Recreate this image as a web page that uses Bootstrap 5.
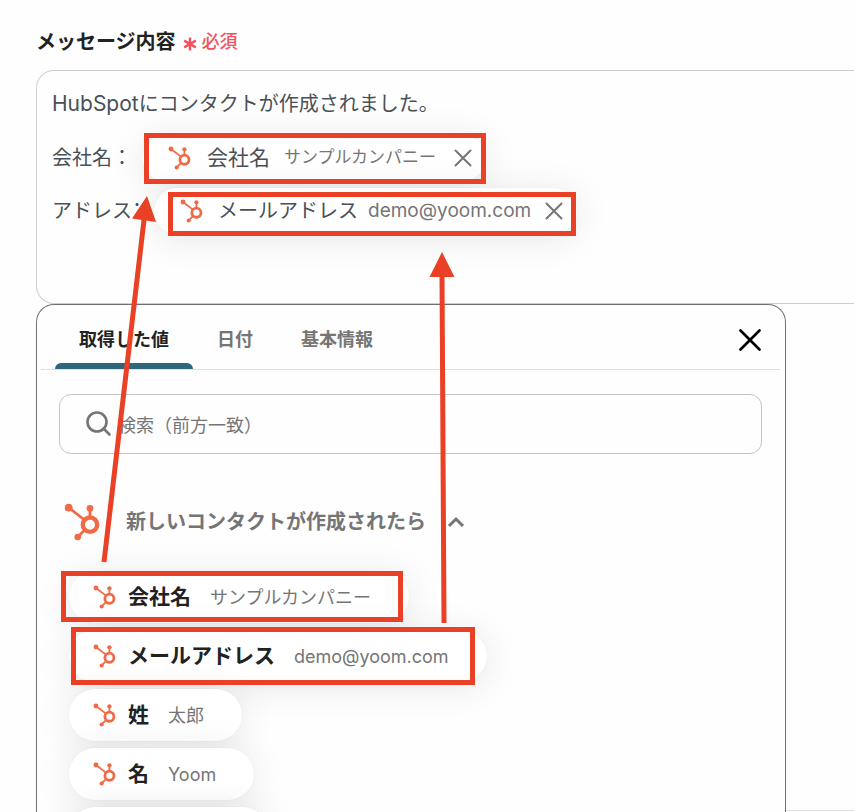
<!DOCTYPE html>
<html lang="ja">
<head>
<meta charset="utf-8">
<meta name="viewport" content="width=device-width, initial-scale=1">
<title>メッセージ内容</title>
<link href="https://cdn.jsdelivr.net/npm/bootstrap@5.3.0/dist/css/bootstrap.min.css" rel="stylesheet">
<style>
  body { font-family: Inter, "Noto Sans CJK JP", sans-serif; color: #222; background: #fefefe; }
  .page { padding: 24px 0 0 36px; }
  .field-title { font-size: 20px; line-height: 36px; font-weight: 700; margin-bottom: 10px; }
  .required { color: #f0535f; font-size: 18px; font-weight: 500; margin-left: 7px; }
  .required svg { margin: 4px 5px 0 0; }
  .editor { border: 1px solid #ccced2; border-right: 0; border-radius: 18px 0 0 18px; padding: 8px 15px 68px; color: #495057; font-size: 20px; background: #fefefe; }
  .editor-line { height: 50px; }
  .editor-line + .editor-line { height: 57px; }
  .editor-line + .editor-line + .editor-line { height: 49px; }
  .latin { font-size: 21px; }
  .line-label { min-width: 90px; }
  .line-label-long { min-width: 102px; }
  .colon { font-feature-settings: "palt"; }
  .tag { height: 52px; border-radius: 26px; background: #fff; box-shadow: 0 4px 36px rgba(0,0,0,.1), 0 0 2px rgba(0,0,0,.05); border: 0; white-space: nowrap; font-size: 21px; color: #222; }
  .tag svg { width: 24px; height: 24px; }
  .tag .val { font-size: 18px; font-weight: 400; color: #757575; }
  .tag-editor { color: #495057; height: 46px; padding: 0 14px 0 26px; }
  .tag-editor .nm { margin: 0 14px 0 15px; }
  .tag-editor .val { font-size: 17px; }
  .tag-editor .val-latin { font-size: 19px; padding-top: 2px; }
  .tag-editor .tag-close { margin-left: 18px; }
  .tag-long .nm { font-size: 20px; margin: 0 10px 0 14px; }
  .tag-long .tag-close { margin-left: 14px; }
  .tag-panel { padding: 0 38px 0 24px; }
  .tag-panel .nm { margin: 0 19px 0 11px; font-weight: 700; }
  .tag-panel .nm, .source-title { line-height: 30px; }
  .tag-next { width: 200px; }
  .plain-btn { background: none; border: 0; padding: 0; line-height: 0; }
  .tag .tag-close svg { width: 18px; height: 18px; }
  .picker { width: 750px; border: 1px solid #707070; border-bottom: 0; border-radius: 18px 18px 0 0; background: #fefefe; box-shadow: 0 240px 30px -30px rgba(0,0,0,.04); }
  .picker-tabs { margin: 0 5px 0 4px; padding: 0 19px 0 14px; border-bottom: 1px solid #e0e0e0; height: 65px; }
  .tab-btn { background: none; border: 0; padding: 5px 24px 0; font-size: 18px; font-weight: 700; color: #757575; position: relative; }
  .tab-btn.active { color: #222; }
  .tab-btn.active::after { content: ""; position: absolute; inset: auto 0 0 0; height: 6px; border-radius: 6px 6px 0 0; background: #2e667e; }
  .picker-close { padding-top: 6px; }
  .search-box { margin: 24px 23px 0 22px; height: 60px; border: 1px solid #c4c4c4; border-radius: 12px; padding: 0 26px; }
  .search-box input { border: 0; outline: 0; background: none; font-size: 18px; margin-left: 6px; padding: 3px 0 0; color: #222; }
  .search-box input::placeholder { color: #757575; opacity: 1; }
  .source { margin: 46px 27px 28px; height: 43px; }
  .source-title { font-size: 20px; font-weight: 700; color: #757575; margin: 0 21px 0 24px; }
  .tag-list { gap: 7px; padding-left: 32px; }
  .form-edge { border-bottom: 1px solid #e0e0e0; height: 507px; }
  .marks { pointer-events: none; }
</style>
<script src="https://cdn.jsdelivr.net/npm/bootstrap@5.3.0/dist/js/bootstrap.bundle.min.js"></script>
</head>
<body class="vh-100 overflow-hidden position-relative">
<svg class="d-none" aria-hidden="true">
  <symbol id="hub" viewBox="0 0 38 38">
    <g fill="#f06a45"><circle cx="4.7" cy="4.7" r="3.9"/><circle cx="26" cy="5.3" r="3.4"/><circle cx="13.7" cy="34" r="3.3"/></g>
    <g fill="none" stroke="#f06a45"><path d="M4.7 4.7 20 16.5M26 5v9M20.5 27.2 13.7 34" stroke-width="2.8"/><circle cx="26" cy="21.7" r="7.2" stroke-width="4.4"/></g>
  </symbol>
  <symbol id="cross" viewBox="0 0 18 18"><path d="M1.5 1.5l15 15M16.5 1.5l-15 15" fill="none" stroke="currentColor" stroke-width="2" stroke-linecap="round"/></symbol>
</svg>
<main class="page">
  <div class="field-title d-flex align-items-center"><span id="msg-label">メッセージ内容</span><span class="required d-flex align-items-center"><svg width="14" height="14" viewBox="0 0 14 14" aria-hidden="true"><path d="M7 .5v13M1.200 3.600l11.600 6.800M12.800 3.600L1.200 10.400" stroke="currentColor" stroke-width="2.400"/></svg>必須</span></div>
  <div class="editor" role="textbox" aria-multiline="true" aria-labelledby="msg-label">
    <div class="editor-line d-flex align-items-center"><span><span class="latin">HubSpot</span>にコンタクトが作成されました。</span></div>
    <div class="editor-line d-flex align-items-center"><span class="line-label">会社名：</span><span class="tag tag-editor d-inline-flex align-items-center"><svg><use href="#hub"/></svg><span class="nm">会社名</span><span class="val">サンプルカンパニー</span><button type="button" class="plain-btn tag-close val" aria-label="会社名を削除"><svg><use href="#cross"/></svg></button></span></div>
    <div class="editor-line d-flex align-items-center"><span class="line-label-long">アドレス<span class="colon">：</span></span><span class="tag tag-editor tag-long d-inline-flex align-items-center"><svg><use href="#hub"/></svg><span class="nm">メールアドレス</span><span class="val val-latin">demo@yoom.com</span><button type="button" class="plain-btn tag-close val" aria-label="メールアドレスを削除"><svg><use href="#cross"/></svg></button></span></div>
  </div>
  <div class="d-flex align-items-start">
    <section class="picker flex-shrink-0">
      <div class="picker-tabs d-flex" role="tablist">
        <button type="button" class="tab-btn active" role="tab" aria-selected="true">取得した値</button>
        <button type="button" class="tab-btn" role="tab" aria-selected="false">日付</button>
        <button type="button" class="tab-btn" role="tab" aria-selected="false">基本情報</button>
        <button type="button" class="plain-btn picker-close ms-auto text-black" aria-label="閉じる"><svg width="22" height="22" viewBox="0 0 22 22"><path d="M1.5 1.5l19 19M20.5 1.5l-19 19" stroke="currentColor" stroke-width="2.6" stroke-linecap="round"/></svg></button>
      </div>
      <label class="search-box d-flex align-items-center">
        <svg width="26" height="26" viewBox="0 0 26 26" fill="none" stroke="#757575" stroke-width="2.6"><circle cx="11" cy="11" r="9.500"/><path d="M17.500 17.500l6 6" stroke-linecap="round"/></svg>
        <input type="text" class="flex-grow-1" placeholder="検索（前方一致）" aria-label="検索">
      </label>
      <div class="source d-flex align-items-center">
        <svg width="38" height="38"><use href="#hub"/></svg>
        <span class="source-title">新しいコンタクトが作成されたら</span>
        <button type="button" class="plain-btn" aria-label="折りたたむ"><svg width="18" height="12" viewBox="0 0 18 12"><path d="M2 10l7-7 7 7" fill="none" stroke="#757575" stroke-width="3"/></svg></button>
      </div>
      <div class="tag-list d-flex flex-column align-items-start">
        <button type="button" class="tag tag-panel d-flex align-items-center"><svg><use href="#hub"/></svg><span class="nm">会社名</span><span class="val">サンプルカンパニー</span></button>
        <button type="button" class="tag tag-panel d-flex align-items-center"><svg><use href="#hub"/></svg><span class="nm">メールアドレス</span><span class="val">demo@yoom.com</span></button>
        <button type="button" class="tag tag-panel d-flex align-items-center"><svg><use href="#hub"/></svg><span class="nm">姓</span><span class="val">太郎</span></button>
        <button type="button" class="tag tag-panel d-flex align-items-center"><svg><use href="#hub"/></svg><span class="nm">名</span><span class="val">Yoom</span></button>
        <button type="button" class="tag tag-panel tag-next d-flex align-items-center"><svg><use href="#hub"/></svg></button>
      </div>
    </section>
    <div class="form-edge flex-grow-1"></div>
  </div>
</main>
<svg class="marks position-absolute top-0 start-0" width="854" height="812" viewBox="0 0 854 812" fill="none" stroke="#ea4025" stroke-width="5" aria-hidden="true">
  <rect x="146.500" y="135.500" width="337" height="46"/>
  <rect x="170.500" y="194.500" width="403" height="39"/>
  <rect x="63.500" y="573.500" width="337" height="46"/>
  <rect x="73.500" y="629.500" width="399" height="53"/>
  <path d="M104 562 144 220M444 623 442 274"/>
  <path d="M147 196 132 218.500 156 222ZM442 252 429.500 277H454.500Z" fill="#ea4025" stroke="none"/>
</svg>
</body>
</html>
